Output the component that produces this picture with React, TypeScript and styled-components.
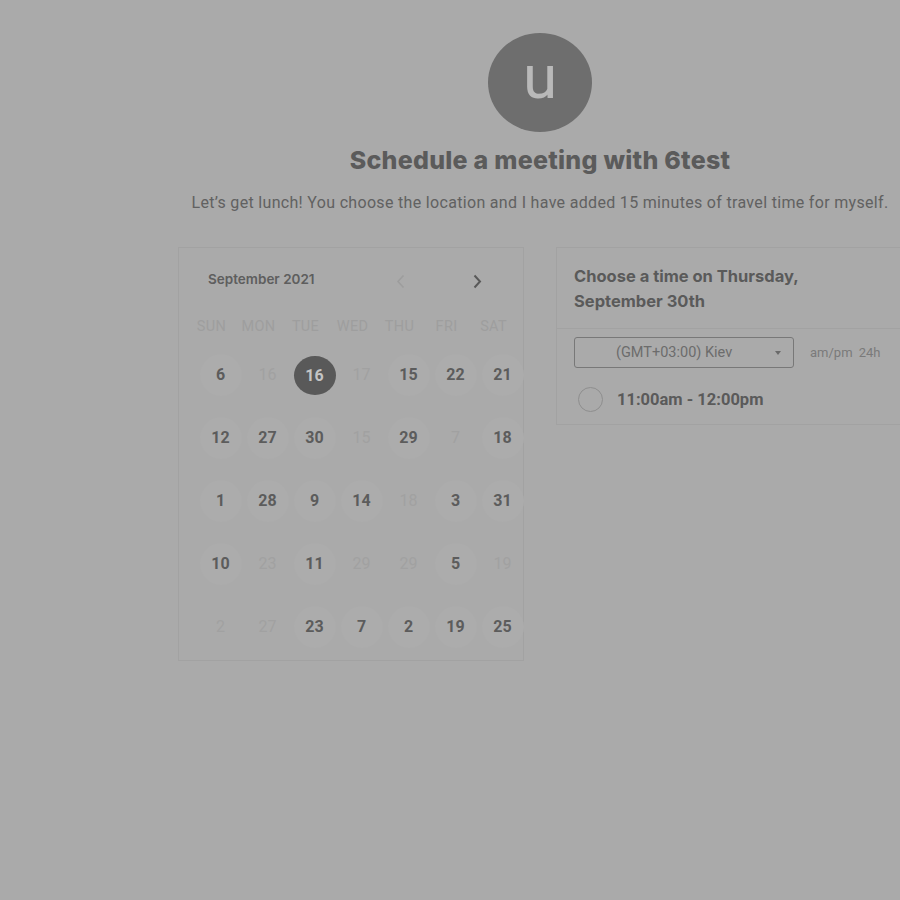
import React from "react";
import styled, { createGlobalStyle } from "styled-components";

const Global = createGlobalStyle`
  html, body { margin: 0; padding: 0; background: #aaaaaa; }
  body { font-family: Roboto, "Liberation Sans", sans-serif; overflow: hidden; }
  * { box-sizing: border-box; }
`;

const Page = styled.div`
  width: 900px;
  height: 900px;
  padding: 33px 0 0 178px;
  overflow: hidden;
`;

const Inner = styled.div`
  width: 724px;
`;

const Header = styled.header`
  display: flex;
  flex-direction: column;
  align-items: center;
`;

const Avatar = styled.div`
  width: 104px;
  height: 99px;
  border-radius: 50%;
  background: #6e6e6e;
  color: #b9b9b9;
  font-family: Roboto, sans-serif;
  font-size: 62px;
  line-height: 88px;
  text-align: center;
  font-weight: 400;
`;

const Title = styled.h1`
  margin: 13px 0 0;
  font-family: Inter, "Liberation Sans", sans-serif;
  font-weight: 800;
  font-size: 25px;
  line-height: 30px;
  color: #5b5b5b;
  letter-spacing: 0.25px;
`;

const Description = styled.p`
  margin: 19px 0 0;
  font-family: Roboto, sans-serif;
  font-size: 16px;
  line-height: 18px;
  color: #616161;
  white-space: nowrap;
  letter-spacing: 0.32px;
`;

const Main = styled.div`
  display: flex;
  gap: 32px;
  margin-top: 35px;
  align-items: flex-start;
`;

const Calendar = styled.section`
  width: 346px;
  height: 414px;
  border: 1px solid #a2a2a2;
  padding-top: 16px;
`;

const MonthBar = styled.div`
  display: flex;
  align-items: center;
  height: 30px;
  padding-left: 29px;
`;

const MonthLabel = styled.div`
  font-family: Inter, sans-serif;
  font-weight: 600;
  font-size: 13.5px;
  color: #5e5e5e;
  width: 185px;
`;

const Arrow = styled.button<{ $faint?: boolean }>`
  border: 0;
  background: none;
  padding: 0;
  width: 14px;
  height: 16px;
  margin-top: 5px;
  display: flex;
  align-items: center;
  justify-content: center;
  color: ${(p) => (p.$faint ? "#9d9d9d" : "#595959")};
`;

const ArrowGap = styled.div`
  width: 63px;
`;

const WeekRow = styled.div`
  display: grid;
  grid-template-columns: repeat(7, 47px);
  padding-left: 9px;
  margin-top: 22px;
  height: 20px;
  align-items: center;
`;

const WeekDay = styled.div`
  text-align: center;
  font-family: Roboto, sans-serif;
  font-size: 14.5px;
  color: #9e9e9e;
  letter-spacing: 0.3px;
`;

const Days = styled.div`
  display: grid;
  grid-template-columns: repeat(7, 47px);
  grid-auto-rows: 63px;
  padding-left: 18px;
  margin-top: 7px;
`;

const DayCell = styled.div`
  display: flex;
  align-items: center;
  justify-content: center;
`;

const Day = styled.div<{ $state: "on" | "off" | "sel" }>`
  width: 42px;
  border-radius: 50%;
  display: flex;
  align-items: center;
  justify-content: center;
  font-family: Roboto, sans-serif;
  font-size: 16px;
  font-weight: ${(p) => (p.$state === "off" ? 400 : 700)};
  color: ${(p) =>
    p.$state === "off" ? "#a1a1a1" : p.$state === "sel" ? "#c4c4c4" : "#5c5c5c"};
  background: ${(p) =>
    p.$state === "sel" ? "#595959" : p.$state === "on" ? "#acacac" : "transparent"};
  margin-top: ${(p) => (p.$state === "sel" ? "2px" : "0")};
  height: ${(p) => (p.$state === "sel" ? "39px" : "42px")};
`;

const TimePanel = styled.section`
  width: 360px;
  border: 1px solid #a2a2a2;
  border-right: 0;
`;

const TimeHeader = styled.div`
  padding: 16px 17px 14px;
  border-bottom: 1px solid #a2a2a2;
  font-family: Inter, sans-serif;
  font-weight: 700;
  font-size: 16.5px;
  line-height: 25px;
  color: #5a5a5a;
`;

const ZoneRow = styled.div`
  display: flex;
  align-items: center;
  gap: 16px;
  padding: 8px 17px 0;
`;

const Select = styled.div`
  width: 220px;
  height: 31px;
  border: 1px solid #787878;
  border-radius: 3px;
  display: flex;
  align-items: center;
  padding: 0 12px 0 41px;
  font-family: Roboto, sans-serif;
  font-size: 14.5px;
  color: #6c6c6c;
`;

const SelectText = styled.span`
  flex: 1;
`;

const Caret = styled.span`
  width: 0;
  height: 0;
  border-left: 3.5px solid transparent;
  border-right: 3.5px solid transparent;
  border-top: 4px solid #6a6a6a;
`;

const FormatToggle = styled.div`
  font-family: Roboto, sans-serif;
  font-size: 13px;
  color: #7a7a7a;
  word-spacing: 3px;
`;

const SlotRow = styled.div`
  display: flex;
  align-items: center;
  gap: 14px;
  padding: 19px 17px 12px 21px;
`;

const Radio = styled.span`
  width: 25px;
  height: 25px;
  border-radius: 50%;
  border: 1.5px solid #8e8e8e;
`;

const SlotLabel = styled.span`
  font-family: Roboto, sans-serif;
  font-weight: 700;
  font-size: 16.5px;
  color: #5a5a5a;
`;

type S = "on" | "off" | "sel";
const rows: [string, S][][] = [
  [["6", "on"], ["16", "off"], ["16", "sel"], ["17", "off"], ["15", "on"], ["22", "on"], ["21", "on"]],
  [["12", "on"], ["27", "on"], ["30", "on"], ["15", "off"], ["29", "on"], ["7", "off"], ["18", "on"]],
  [["1", "on"], ["28", "on"], ["9", "on"], ["14", "on"], ["18", "off"], ["3", "on"], ["31", "on"]],
  [["10", "on"], ["23", "off"], ["11", "on"], ["29", "off"], ["29", "off"], ["5", "on"], ["19", "off"]],
  [["2", "off"], ["27", "off"], ["23", "on"], ["7", "on"], ["2", "on"], ["19", "on"], ["25", "on"]],
];

const weekdays = ["SUN", "MON", "TUE", "WED", "THU", "FRI", "SAT"];

export default function App() {
  return (
    <Page>
      <Global />
      <Inner>
        <Header>
          <Avatar>u</Avatar>
          <Title>Schedule a meeting with 6test</Title>
          <Description>
            Let’s get lunch! You choose the location and I have added 15 minutes of travel time for myself.
          </Description>
        </Header>
        <Main>
          <Calendar>
            <MonthBar>
              <MonthLabel>September 2021</MonthLabel>
              <Arrow $faint aria-label="previous">
                <svg width="9" height="15" viewBox="0 0 9 15">
                  <polyline points="7.5,1.5 2,7.5 7.5,13.5" fill="none" stroke="currentColor" strokeWidth="1.6" />
                </svg>
              </Arrow>
              <ArrowGap />
              <Arrow aria-label="next">
                <svg width="9" height="15" viewBox="0 0 9 15">
                  <polyline points="1.5,1.5 7,7.5 1.5,13.5" fill="none" stroke="currentColor" strokeWidth="2" />
                </svg>
              </Arrow>
            </MonthBar>
            <WeekRow>
              {weekdays.map((w) => (
                <WeekDay key={w}>{w}</WeekDay>
              ))}
            </WeekRow>
            <Days>
              {rows.flat().map(([n, s], i) => (
                <DayCell key={i}>
                  <Day $state={s}>{n}</Day>
                </DayCell>
              ))}
            </Days>
          </Calendar>
          <TimePanel>
            <TimeHeader>
              Choose a time on Thursday,
              <br />
              September 30th
            </TimeHeader>
            <ZoneRow>
              <Select>
                <SelectText>(GMT+03:00) Kiev</SelectText>
                <Caret />
              </Select>
              <FormatToggle>am/pm 24h</FormatToggle>
            </ZoneRow>
            <SlotRow>
              <Radio />
              <SlotLabel>11:00am - 12:00pm</SlotLabel>
            </SlotRow>
          </TimePanel>
        </Main>
      </Inner>
    </Page>
  );
}
